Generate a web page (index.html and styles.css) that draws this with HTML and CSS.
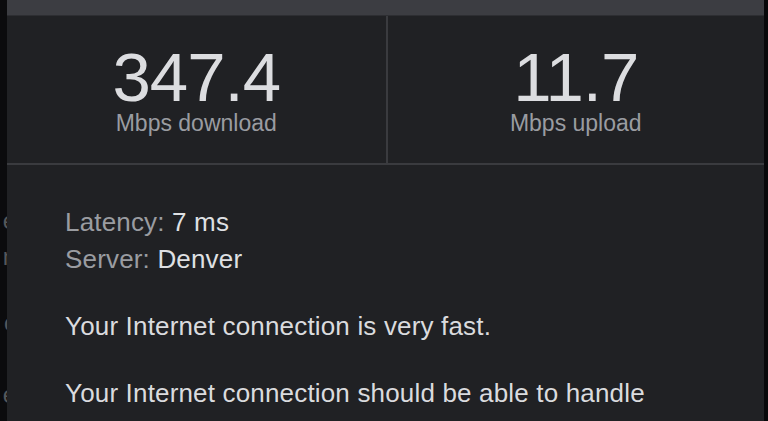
FILE: index.html
```html
<!DOCTYPE html>
<html lang="en">
<head>
    <meta charset="UTF-8">
    <meta name="viewport" content="width=device-width, initial-scale=1.0">
    <title>Internet speed test</title>
    <link rel="stylesheet" href="styles.css">
</head>
<body>
    <div class="page-edge">
        <span class="edge-char first">e</span>
        <span class="edge-char">n</span>
        <span class="edge-char gap">c</span>
        <span class="edge-char">t</span>
        <span class="edge-char">e</span>
    </div>

    <div class="panel">
        <div class="topbar"></div>

        <div class="stats">
            <div class="stat">
                <div class="stat-value">347.4</div>
                <div class="stat-label">Mbps download</div>
            </div>
            <div class="stat">
                <div class="stat-value">11.7</div>
                <div class="stat-label">Mbps upload</div>
            </div>
        </div>

        <div class="details">
            <div class="detail-row"><span class="detail-key">Latency:</span> 7 ms</div>
            <div class="detail-row"><span class="detail-key">Server:</span> Denver</div>
            <p class="summary">Your Internet connection is very fast.</p>
            <p class="summary">Your Internet connection should be able to handle</p>
        </div>
    </div>

    <div class="page-edge-right"></div>
</body>
</html>
```

FILE: styles.css
```css
body {
    margin: 0;
    height: 100vh;
    overflow: hidden;
    display: flex;
    background-color: #0b0b0d;
    font-family: 'Liberation Sans', Arial, sans-serif;
    color: #dfe0e3;
}
.page-edge {
    width: 7px;
    overflow: hidden;
    display: flex;
    flex-direction: column;
    align-items: flex-end;
    color: #55575b;
    font-size: 24px;
    line-height: 36px;
}
.edge-char {
    display: block;
    margin-right: -9px;
}
.edge-char.first {
    margin-top: 203px;
}
.edge-char.gap {
    margin-top: 30px;
}
.page-edge-right {
    width: 4px;
    background-color: #08080a;
}
.panel {
    flex: 1;
    background-color: #202124;
    display: flex;
    flex-direction: column;
}
.topbar {
    height: 15px;
    background-color: #3c3d42;
    border-bottom: 1px solid #2d2e32;
}
.stats {
    display: grid;
    grid-template-columns: 1fr 1fr;
    height: 147px;
    border-bottom: 2px solid #3a3b3f;
}
.stat {
    text-align: center;
    padding-top: 33px;
}
.stat + .stat {
    border-left: 2px solid #3a3b3f;
}
.stat-value {
    font-size: 69px;
    line-height: 58px;
    color: #dcdde0;
    letter-spacing: -1px;
}
.stat-label {
    margin-top: 3px;
    font-size: 23px;
    line-height: 26px;
    color: #9a9ca1;
}
.details {
    padding: 39px 0 0 58px;
    font-size: 26px;
    line-height: 37px;
    letter-spacing: 0.17px;
}
.detail-key {
    color: #9a9ca1;
}
.summary {
    margin: 30px 0 0;
    color: #dadbde;
}
```
